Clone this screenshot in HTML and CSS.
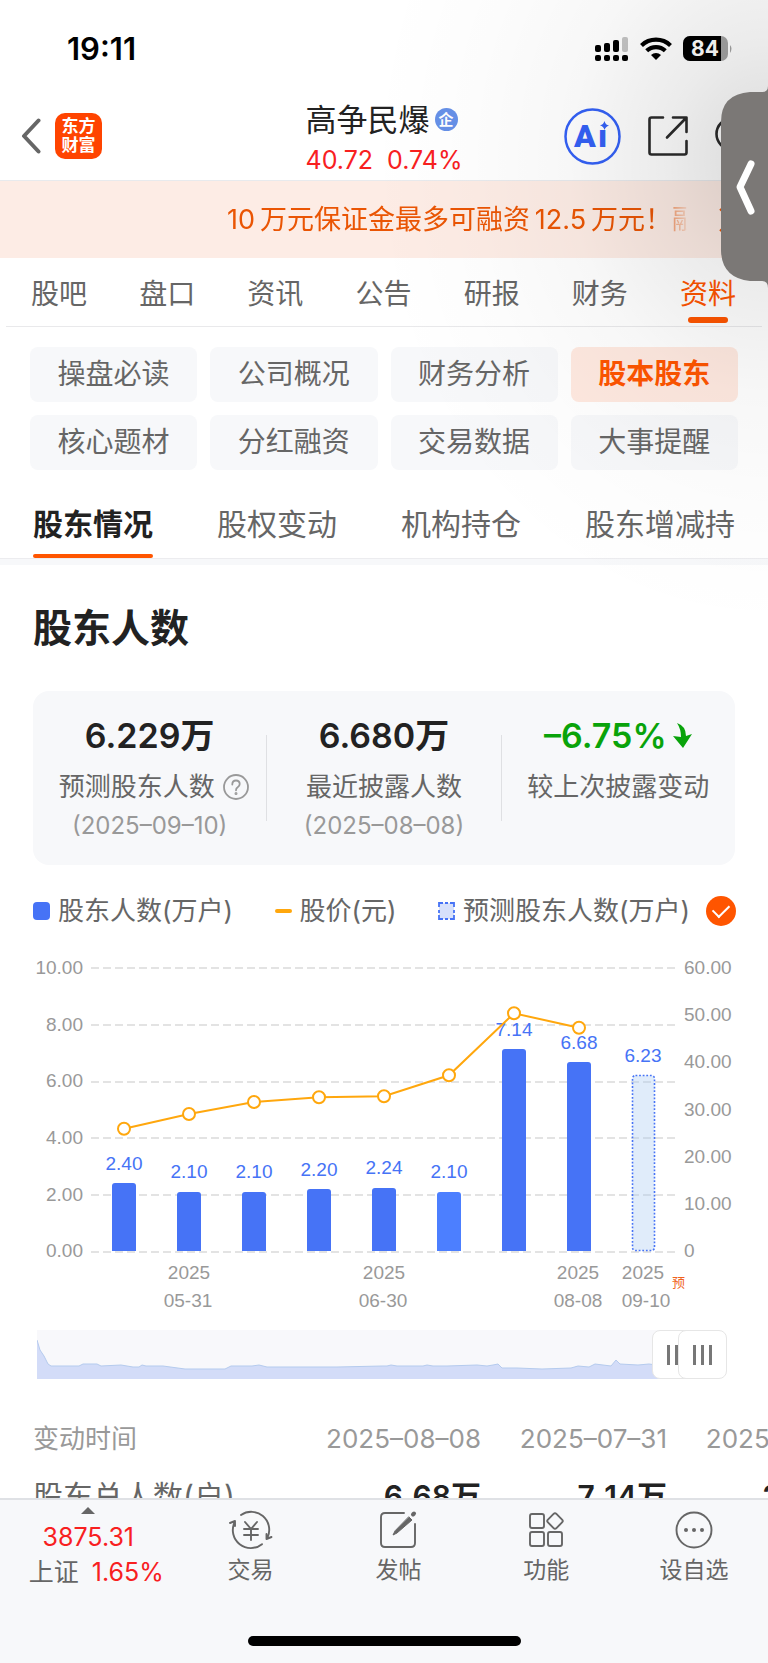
FILE: index.html
```html
<!DOCTYPE html>
<html lang="zh-CN">
  <head>
    <meta charset="UTF-8" />
    <meta name="viewport" content="width=device-width, initial-scale=1.0" />
    <title>高争民爆 - 股东人数</title>
    <link rel="stylesheet" href="styles.css">
  </head>

  <body>
    <div class="status-bar">
      <span class="status-time">19:11</span>
      <div class="status-icons">
        <svg width="34" height="26" viewBox="0 0 34 26">
          <rect x="0" y="9" width="6" height="7" rx="2" />
          <rect x="9" y="7" width="6" height="9" rx="2" />
          <rect x="18" y="4" width="6" height="12" rx="2" />
          <rect x="27" y="1" width="6" height="15" rx="2" fill="#c4c4c4" />
          <rect x="0" y="19" width="6" height="6" rx="2" />
          <rect x="9" y="19" width="6" height="6" rx="2" />
          <rect x="18" y="19" width="6" height="6" rx="2" />
          <rect x="27" y="19" width="6" height="6" rx="2" />
        </svg>
        <svg width="32" height="26" viewBox="0 0 32 26">
          <g fill="none" stroke="#000" stroke-width="4.2">
            <path d="M1.5 9.5a21 21 0 0 1 29 0" />
            <path d="M6.7 14.8a13.5 13.5 0 0 1 18.6 0" />
          </g>
          <path d="M11 19a7.4 7.4 0 0 1 10 0l-5 5z" />
        </svg>
        <svg width="50" height="26" viewBox="0 0 50 26">
          <defs>
            <clipPath id="battery"><rect x="0" y="0" width="45" height="25" rx="7" /></clipPath>
          </defs>
          <g clip-path="url(#battery)">
            <rect width="45" height="25" fill="#a3a3a3" />
            <rect width="38" height="25" fill="#000" />
          </g>
          <path d="M47 9q3 3.500 0 8z" fill="#a3a3a3" />
          <text x="22" y="20" class="battery-text">84</text>
        </svg>
      </div>
    </div>

    <header class="header">
      <div class="header-side">
        <button class="icon-button" aria-label="返回">
          <svg width="20" height="36" viewBox="0 0 20 36">
            <path d="M17.500 2.500L3 18l14.500 15.500" fill="none" stroke="#666" stroke-width="4" stroke-linecap="round" stroke-linejoin="round" />
          </svg>
        </button>
        <a class="logo" href="#">东方<br>财富</a>
      </div>
      <div class="stock">
        <h1 class="stock-name">高争民爆<span class="stock-badge">企</span></h1>
        <p class="stock-price"><span>40.72</span><span>0.74%</span></p>
      </div>
      <div class="header-side header-actions">
        <button class="icon-button" aria-label="Ai">
          <svg width="57" height="57" viewBox="0 0 57 57">
            <circle cx="28.500" cy="28.500" r="27" fill="none" stroke="#3461f6" stroke-width="2.500" />
            <text y="39" class="ai-text"><tspan x="10">A</tspan><tspan x="34">ı</tspan></text>
            <path d="M40.500 13q1 4 4.500 4.500-3.500 1-4.500 4.500-1-4-4.500-4.500 3.500-1 4.500-4.500z" fill="#3461f6" />
          </svg>
        </button>
        <button class="icon-button" aria-label="分享">
          <svg width="40" height="40" viewBox="0 0 40 40" fill="none" stroke="#2b2b2b" stroke-width="2.600" stroke-linecap="round" stroke-linejoin="round">
            <path d="M15 1.500H3.500q-2 0-2 2v33q0 2 2 2h33q2 0 2-2V25" />
            <path d="M25 1.500h13.500V16M38 2L19 21.500" />
          </svg>
        </button>
        <button class="icon-button" aria-label="搜索">
          <svg width="34" height="40" viewBox="0 0 34 40" fill="none" stroke="#2b2b2b" stroke-width="2.600" stroke-linecap="round">
            <circle cx="17" cy="18" r="15.500" />
            <path d="M27 30l6 6" />
          </svg>
        </button>
      </div>
    </header>

    <div class="banner">
      <a class="banner-text" href="#">10&thinsp;万元保证金最多可融资&thinsp;12.5&thinsp;万元！融资</a>
      <button class="icon-button" aria-label="关闭">
        <svg width="24" height="24" viewBox="0 0 24 24">
          <path d="M1 1l22 22M23 1L1 23" stroke="#ea5504" stroke-width="2" />
        </svg>
      </button>
    </div>

    <nav class="tabs">
      <a href="#">股吧</a>
      <a href="#">盘口</a>
      <a href="#">资讯</a>
      <a href="#">公告</a>
      <a href="#">研报</a>
      <a href="#">财务</a>
      <a href="#" class="active">资料</a>
    </nav>

    <div class="chips">
      <button>操盘必读</button>
      <button>公司概况</button>
      <button>财务分析</button>
      <button class="active">股本股东</button>
      <button>核心题材</button>
      <button>分红融资</button>
      <button>交易数据</button>
      <button>大事提醒</button>
    </div>

    <nav class="subtabs">
      <a href="#" class="active">股东情况</a>
      <a href="#">股权变动</a>
      <a href="#">机构持仓</a>
      <a href="#">股东增减持</a>
    </nav>

    <main class="content">
      <h2>股东人数</h2>

      <section class="summary">
        <div class="summary-item">
          <strong>6.229万</strong>
          <span class="summary-label has-help">预测股东人数
            <svg width="26" height="26" viewBox="0 0 26 26" fill="none" stroke="#999" stroke-width="1.800">
              <circle cx="13" cy="13" r="12" />
              <path d="M9.300 10.500q0-4 3.700-4t3.700 3.600q0 2-2 3.200-1.700 1-1.700 3" stroke-linecap="round" />
              <circle cx="13" cy="19.500" r="0.600" />
            </svg>
          </span>
          <span class="summary-date">(2025–09–10)</span>
        </div>
        <div class="summary-divider"></div>
        <div class="summary-item">
          <strong>6.680万</strong>
          <span class="summary-label">最近披露人数</span>
          <span class="summary-date">(2025–08–08)</span>
        </div>
        <div class="summary-divider"></div>
        <div class="summary-item">
          <strong class="down">–6.75%
            <svg width="20" height="26" viewBox="0 0 20 26">
              <path d="M4 0q9 3 9 13l6-2-9 14L0 13l8 1Q8 6 4 0z" fill="#09a30a" />
            </svg>
          </strong>
          <span class="summary-label">较上次披露变动</span>
        </div>
      </section>

      <div class="legend">
        <span class="legend-item"><i class="mark-bar"></i>股东人数(万户)</span>
        <span class="legend-item"><i class="mark-line"></i>股价(元)</span>
        <label class="legend-item">
          <svg width="17" height="18" viewBox="0 0 17 18">
            <rect x="1" y="1" width="15" height="16" fill="#d7e1fb" />
            <path d="M1 5V1h4M12 1h4v4M16 13v4h-4M5 17H1v-4M7 1h3M7 17h3M1 8v3M16 8v3" fill="none" stroke="#4673f6" stroke-width="1.800" />
          </svg>
          预测股东人数(万户)
          <input type="checkbox" class="legend-check" checked />
        </label>
      </div>

      <svg class="chart" viewBox="0 0 768 390">
        <g class="grid-lines">
          <path d="M91 28H676M91 85H676M91 142H676M91 198H676M91 255H676M91 312H676" />
        </g>
        <g class="axis-text axis-left">
          <text x="83" y="34">10.00</text>
          <text x="83" y="91">8.00</text>
          <text x="83" y="147">6.00</text>
          <text x="83" y="204">4.00</text>
          <text x="83" y="261">2.00</text>
          <text x="83" y="317">0.00</text>
        </g>
        <g class="axis-text">
          <text x="684" y="34">60.00</text>
          <text x="684" y="81">50.00</text>
          <text x="684" y="128">40.00</text>
          <text x="684" y="176">30.00</text>
          <text x="684" y="223">20.00</text>
          <text x="684" y="270">10.00</text>
          <text x="684" y="317">0</text>
        </g>
        <g fill="#4673f6">
          <path d="M112 311V246q0-3 3-3h18q3 0 3 3v65z" />
          <path d="M177 311V255q0-3 3-3h18q3 0 3 3v56z" />
          <path d="M242 311V255q0-3 3-3h18q3 0 3 3v56z" />
          <path d="M307 311V252q0-3 3-3h18q3 0 3 3v59z" />
          <path d="M372 311V251q0-3 3-3h18q3 0 3 3v60z" />
          <path d="M437 311V255q0-3 3-3h18q3 0 3 3v56z" fill="#4c7fff" />
          <path d="M502 311V112q0-3 3-3h18q3 0 3 3v199z" />
          <path d="M567 311V125q0-3 3-3h18q3 0 3 3v186z" />
        </g>
        <rect x="632.500" y="135.500" width="22" height="175" rx="3" fill="#a6c8f0" fill-opacity="0.350" stroke="#4673f6" stroke-width="1.600" stroke-dasharray="1.800 1.800" />
        <g class="bar-text">
          <text x="124" y="230">2.40</text>
          <text x="189" y="238">2.10</text>
          <text x="254" y="238">2.10</text>
          <text x="319" y="236">2.20</text>
          <text x="384" y="234">2.24</text>
          <text x="449" y="238">2.10</text>
          <text x="514" y="96">7.14</text>
          <text x="579" y="109">6.68</text>
          <text x="643" y="122">6.23</text>
        </g>
        <g class="price-line">
          <path d="M124 188.700L189 174L254 162L319 157.300L384 156.300L449 135.300L514 73.300L579 87.700" />
          <circle cx="124" cy="188.700" r="6" />
          <circle cx="189" cy="174" r="6" />
          <circle cx="254" cy="162" r="6" />
          <circle cx="319" cy="157.300" r="6" />
          <circle cx="384" cy="156.300" r="6" />
          <circle cx="449" cy="135.300" r="6" />
          <circle cx="514" cy="73.300" r="6" />
          <circle cx="579" cy="87.700" r="6" />
        </g>
        <g class="axis-text axis-bottom">
          <text x="189" y="339">2025</text>
          <text x="188" y="367">05-31</text>
          <text x="384" y="339">2025</text>
          <text x="383" y="367">06-30</text>
          <text x="578" y="339">2025</text>
          <text x="578" y="367">08-08</text>
          <text x="643" y="339">2025</text>
          <text x="646" y="367">09-10</text>
        </g>
        <text class="forecast-text" x="672" y="347">预</text>
      </svg>

      <div class="brush">
        <svg class="brush-area" viewBox="0 0 666 49" preserveAspectRatio="none">
          <path d="M0 10L3 20L7 26L11 34L14 36H42L46 34H60L64 36L84 35L96 37H102L105 35L109 36H126L148 39H188L194 36H215L222 35L230 37H300L345 36H350L354 35L360 36H386L390 35L396 36H410L440 35L450 36L456 35L461 34L465 38H480L505 39L534 38L541 36L552 37L558 34L574 36L579 30L583 34L601 35L612 34L627 36L631 33L650 35H666V49H0z" fill="#d3dcf8" />
          <path d="M0 10L3 20L7 26L11 34L14 36H42L46 34H60L64 36L84 35L96 37H102L105 35L109 36H126L148 39H188L194 36H215L222 35L230 37H300L345 36H350L354 35L360 36H386L390 35L396 36H410L440 35L450 36L456 35L461 34L465 38H480L505 39L534 38L541 36L552 37L558 34L574 36L579 30L583 34L601 35L612 34L627 36L631 33L650 35H666" fill="none" stroke="#b5cbee" />
        </svg>
        <input type="range" min="0" max="100" value="96" aria-label="开始日期" />
        <input type="range" min="0" max="100" value="100" aria-label="结束日期" />
      </div>

      <table class="history">
        <thead>
          <tr>
            <th>变动时间</th>
            <th>2025–08–08</th>
            <th>2025–07–31</th>
            <th>2025–07–18</th>
          </tr>
        </thead>
        <tbody>
          <tr>
            <td>股东总人数(户)</td>
            <td>6.68万</td>
            <td>7.14万</td>
            <td>2.10万</td>
          </tr>
        </tbody>
      </table>
    </main>

    <footer class="toolbar">
      <div class="toolbar-items">
        <button class="index-quote">
          <i class="caret"></i>
          <span class="red">3875.31</span>
          <span class="index-change">上证 <b class="red">1.65%</b></span>
        </button>
        <button>
          <svg width="44" height="40" viewBox="0 0 44 40" fill="none" stroke="#666" stroke-width="1.900" stroke-linecap="round" stroke-linejoin="round">
            <path d="M12 5A18 18 0 0 1 38.500 27.500M37.500 29V24M37.500 29l5-2" />
            <path d="M33 34.200A18 18 0 0 1 5.500 12.500M6 11v5M6 11l-5 2" />
            <path d="M16 12l6 7 6-7M15 19h14M15 25h14M22 19v11" />
          </svg>
          <span>交易</span>
        </button>
        <button>
          <svg width="40" height="40" viewBox="0 0 40 40" fill="none" stroke="#666" stroke-width="1.900" stroke-linecap="round">
            <path d="M26 3H7Q3 3 3 7v26q0 4 4 4h26q4 0 4-4V14" />
            <path d="M31 7l3 3L19 23l-4 2 2-4z" fill="#666" stroke-width="1" />
            <path d="M35 4.500l1-1" stroke-width="4" />
          </svg>
          <span>发帖</span>
        </button>
        <button>
          <svg width="40" height="40" viewBox="0 0 40 40" fill="none" stroke="#666" stroke-width="1.900">
            <rect x="4" y="4" width="14" height="14" rx="2" />
            <rect x="4" y="22" width="14" height="14" rx="2" />
            <rect x="22" y="22" width="14" height="14" rx="2" />
            <rect x="23" y="5" width="12" height="12" rx="2" transform="rotate(45 29 11)" />
          </svg>
          <span>功能</span>
        </button>
        <button>
          <svg width="40" height="40" viewBox="0 0 40 40">
            <circle cx="20" cy="20" r="17.500" fill="none" stroke="#666" stroke-width="1.900" />
            <g fill="#666">
              <circle cx="12" cy="20" r="2" />
              <circle cx="20" cy="20" r="2" />
              <circle cx="28" cy="20" r="2" />
            </g>
          </svg>
          <span>设自选</span>
        </button>
      </div>
      <div class="home-indicator"></div>
    </footer>

    <!-- floating drawer handle and the shade around it -->
    <div class="drawer-shade"></div>
    <button class="drawer-handle" aria-label="展开">
      <svg width="48" height="202" viewBox="0 0 48 202">
        <path d="M48 0Q48 6 42 6H30Q1 8 1 36V165Q2 192 30 195H42Q48 195 48 202z" fill="#7b7876" />
        <path d="M31 78L20 101l11 24" fill="none" stroke="#fff" stroke-width="7" stroke-linecap="round" stroke-linejoin="round" />
      </svg>
    </button>
  </body>
</html>
```

FILE: styles.css
```css
:root {
  --orange: #ff5500;
  --red: #f8201f;
  --green: #09a30a;
  --blue: #4673f6;
  --text-color: #222;
  --gray-text: #666;
  --light-text: #999;
  --panel-bg: #f7f8fa;
  --border-color: #e8eaed;
}

* {
  box-sizing: border-box;
  margin: 0;
  padding: 0;
}

body {
  position: relative;
  display: flex;
  flex-direction: column;
  height: 100vh;
  overflow: hidden;
  font-family: Inter, "Noto Sans CJK SC", sans-serif;
  background-color: #fff;
  color: var(--text-color);
}

a {
  color: inherit;
  text-decoration: none;
}

button {
  border: none;
  background: none;
  font: inherit;
  color: inherit;
  cursor: pointer;
}

svg {
  display: block;
  flex-shrink: 0;
}

.icon-button {
  flex-shrink: 0;
}

.red {
  color: var(--red);
}

/* Status bar */
.status-bar {
  display: flex;
  flex-shrink: 0;
  justify-content: space-between;
  align-items: center;
  padding: 29px 35px 29px 67px;
  line-height: 40px;
}

.status-time {
  font-size: 31px;
  font-weight: 600;
  color: #000;
}

.status-icons {
  display: flex;
  gap: 11px;
}

.battery-text {
  font-size: 21px;
  font-weight: 700;
  fill: #fff;
  text-anchor: middle;
}

/* Header */
.header {
  display: grid;
  grid-template-columns: 1fr auto 1fr;
  flex-shrink: 0;
  border-bottom: 1px solid var(--border-color);
}

.header-side {
  display: flex;
  align-items: center;
  gap: 14px;
  padding: 0 19px 6px 21px;
}

.header-actions {
  justify-content: flex-end;
  gap: 27px;
}

.logo {
  width: 47px;
  padding: 4px 0;
  border-radius: 10px;
  background-color: #ff4400;
  color: #fff;
  font-size: 17px;
  font-weight: 700;
  line-height: 19px;
  text-align: center;
}

.stock-name {
  display: flex;
  align-items: center;
  gap: 5px;
  font-size: 31px;
  font-weight: 400;
  line-height: 43px;
}

.stock-badge {
  width: 23px;
  border-radius: 50%;
  background-color: #6690e8;
  color: #fff;
  font-size: 15px;
  font-weight: 700;
  line-height: 23px;
  text-align: center;
}

.stock-price {
  display: flex;
  gap: 14px;
  color: var(--red);
  font-size: 25px;
  line-height: 39px;
}

.ai-text {
  font-family: Roboto, sans-serif;
  font-size: 32px;
  font-weight: 900;
  fill: #3461f6;
}

/* Promotion banner */
.banner {
  display: flex;
  flex-shrink: 0;
  justify-content: space-between;
  align-items: center;
  padding: 0 25px 0 227px;
  background-color: #fdece5;
  color: #ea5504;
}

.banner-text {
  width: 460px;
  overflow: hidden;
  font-size: 27px;
  line-height: 77px;
  white-space: nowrap;
  -webkit-mask-image: linear-gradient(to right, #000 425px, transparent 465px);
  mask-image: linear-gradient(to right, #000 425px, transparent 465px);
}

/* Main tabs */
.tabs {
  display: flex;
  flex-shrink: 0;
  justify-content: space-between;
  margin: 0 6px;
  padding: 0 26px 0 25px;
  border-bottom: 1px solid #e9e9eb;
  color: var(--gray-text);
  font-size: 28px;
  line-height: 40px;
}

.tabs a {
  position: relative;
  padding: 16px 0 12px;
}

.tabs .active {
  color: var(--orange);
}

.tabs .active::after {
  content: "";
  position: absolute;
  left: 8px;
  right: 8px;
  bottom: 3px;
  height: 6px;
  border-radius: 3px;
  background-color: var(--orange);
}

.chips {
  display: grid;
  grid-template-columns: repeat(4, 1fr);
  flex-shrink: 0;
  gap: 13px;
  padding: 20px 30px 32px;
}

.chips button {
  border-radius: 8px;
  background-color: var(--panel-bg);
  color: var(--gray-text);
  font-size: 28px;
  line-height: 55px;
}

.chips .active {
  background-color: #ffe9e0;
  color: var(--orange);
  font-weight: 700;
}

/* Secondary tabs */
.subtabs {
  display: flex;
  flex-shrink: 0;
  justify-content: space-between;
  padding: 0 33px;
  border-bottom: 6px solid var(--panel-bg);
  box-shadow: inset 0 -1px #ececef;
  color: var(--gray-text);
  font-size: 30px;
  line-height: 44px;
}

.subtabs a {
  position: relative;
  padding-bottom: 13px;
}

.subtabs .active {
  color: var(--text-color);
  font-weight: 700;
}

.subtabs .active::after {
  content: "";
  position: absolute;
  left: 0;
  right: 0;
  bottom: 1px;
  height: 4px;
  border-radius: 2px;
  background-color: var(--orange);
}

.content {
  flex: 1;
  min-height: 0;
  overflow: hidden;
}

h2 {
  margin: 34px 33px;
  font-size: 39px;
  font-weight: 700;
  line-height: 58px;
}

/* Summary card */
.summary {
  display: flex;
  margin: 0 33px;
  padding: 21px 0 23px;
  border-radius: 16px;
  background-color: var(--panel-bg);
}

.summary-item {
  display: flex;
  flex: 1;
  flex-direction: column;
  align-items: center;
}

.summary-item strong {
  display: flex;
  align-items: center;
  gap: 6px;
  font-size: 34px;
  font-weight: 600;
  line-height: 48px;
}

.summary-item .down {
  color: var(--green);
}

.summary-label {
  display: flex;
  align-items: center;
  gap: 8px;
  margin-top: 7px;
  color: var(--gray-text);
  font-size: 26px;
  line-height: 40px;
}

.has-help {
  padding-left: 8px;
}

.summary-date {
  margin-top: 3px;
  color: var(--light-text);
  font-size: 24px;
  line-height: 32px;
}

.summary-divider {
  width: 1px;
  margin: 23px 0 21px;
  background-color: #dfe0e3;
}

/* Chart */
.legend {
  display: flex;
  justify-content: space-between;
  margin: 24px 32px 7px 33px;
  color: var(--gray-text);
  font-size: 26px;
  line-height: 44px;
}

.legend-item {
  display: flex;
  align-items: center;
  gap: 8px;
}

.mark-bar {
  width: 17px;
  height: 18px;
  border-radius: 4px;
  background-color: var(--blue);
}

.mark-line {
  width: 17px;
  height: 4px;
  border-radius: 2px;
  background-color: #ffa70d;
}

.legend-check {
  display: grid;
  place-items: center;
  width: 30px;
  height: 30px;
  margin-left: 8px;
  border-radius: 50%;
  background-color: #ccc;
  appearance: none;
}

.legend-check:checked {
  background-color: var(--orange);
}

.legend-check::before {
  content: "";
  width: 14px;
  height: 8px;
  margin-bottom: 5px;
  border: solid #fff;
  border-width: 0 0 2px 2px;
  transform: rotate(-45deg);
}

.chart {
  width: 100%;
  font-family: "Liberation Sans", "Noto Sans CJK SC", sans-serif;
  font-size: 19px;
}

.grid-lines {
  stroke: #e3e3e3;
  stroke-width: 2;
  stroke-dasharray: 8 4;
}

.axis-text {
  fill: var(--light-text);
}

.axis-left {
  text-anchor: end;
}

.axis-bottom,
.bar-text {
  text-anchor: middle;
}

.bar-text {
  fill: var(--blue);
}

.price-line {
  fill: none;
  stroke: #ffa70d;
  stroke-width: 2;
}

.price-line circle {
  fill: #fff;
}

.forecast-text {
  font-size: 13px;
  fill: #f0641e;
}

.brush {
  position: relative;
  height: 49px;
  margin: 0 41px 0 37px;
}

.brush-area {
  width: calc(100% - 24px);
  height: 100%;
  background-color: #f8f8fb;
}

/* both range inputs share the track */
.brush input {
  position: absolute;
  top: 0;
  left: 0;
  width: 100%;
  height: 100%;
  background: none;
  appearance: none;
  pointer-events: none;
}

.brush input::-webkit-slider-thumb {
  width: 49px;
  height: 49px;
  border: 1px solid #e6e6e6;
  border-radius: 8px;
  background: linear-gradient(
      to right,
      #777 0 3px,
      transparent 3px 8px,
      #777 8px 11px,
      transparent 11px 16px,
      #777 16px 19px
    )
    center / 19px 20px no-repeat #fff;
  appearance: none;
  pointer-events: auto;
}

/* History table */
.history {
  width: 820px;
  margin: 40px 0 0 33px;
  border-collapse: collapse;
  table-layout: fixed;
  white-space: nowrap;
}

.history th,
.history td {
  width: 186px;
  text-align: right;
}

.history th {
  color: var(--light-text);
  font-size: 26px;
  font-weight: 400;
  line-height: 40px;
}

.history td {
  padding-top: 15px;
  font-size: 30px;
  font-kerning: none;
  font-weight: 600;
  line-height: 44px;
}

.history th:first-child,
.history td:first-child {
  width: 262px;
  text-align: left;
}

.history td:first-child {
  color: var(--gray-text);
  font-weight: 400;
}

/* Bottom toolbar */
.toolbar {
  flex-shrink: 0;
  border-top: 2px solid #dfe1e5;
  background-color: #f7f8fa;
}

.toolbar-items {
  display: flex;
  padding-top: 7px;
}

.toolbar-items button {
  display: flex;
  flex: 1;
  flex-direction: column;
  align-items: center;
  gap: 4px;
  padding-top: 3px;
  color: var(--gray-text);
  font-size: 23px;
  line-height: 32px;
}

.toolbar-items .index-quote {
  flex: 0 0 23%;
  gap: 0;
  padding: 0;
  font-size: 25px;
  line-height: 35px;
}

.index-change {
  padding-left: 16px;
}

.index-change b {
  margin-left: 6px;
  font-weight: 400;
}

.caret {
  margin-bottom: 6px;
  border: solid transparent;
  border-width: 0 7px 7px;
  border-bottom-color: var(--gray-text);
}

.home-indicator {
  width: 273px;
  height: 10px;
  margin: 46px auto 17px;
  border-radius: 5px;
  background-color: #000;
}

/* Drawer */
.drawer-shade {
  position: absolute;
  top: 0;
  right: 0;
  width: 420px;
  height: 680px;
  background: radial-gradient(
    ellipse 400px 470px at 100% 160px,
    rgba(0, 0, 0, 0.15),
    rgba(0, 0, 0, 0.08) 25%,
    rgba(0, 0, 0, 0.03) 50%,
    rgba(0, 0, 0, 0.01) 75%,
    transparent
  );
  pointer-events: none;
}

.drawer-handle {
  position: absolute;
  top: 86px;
  right: 0;
}
```
